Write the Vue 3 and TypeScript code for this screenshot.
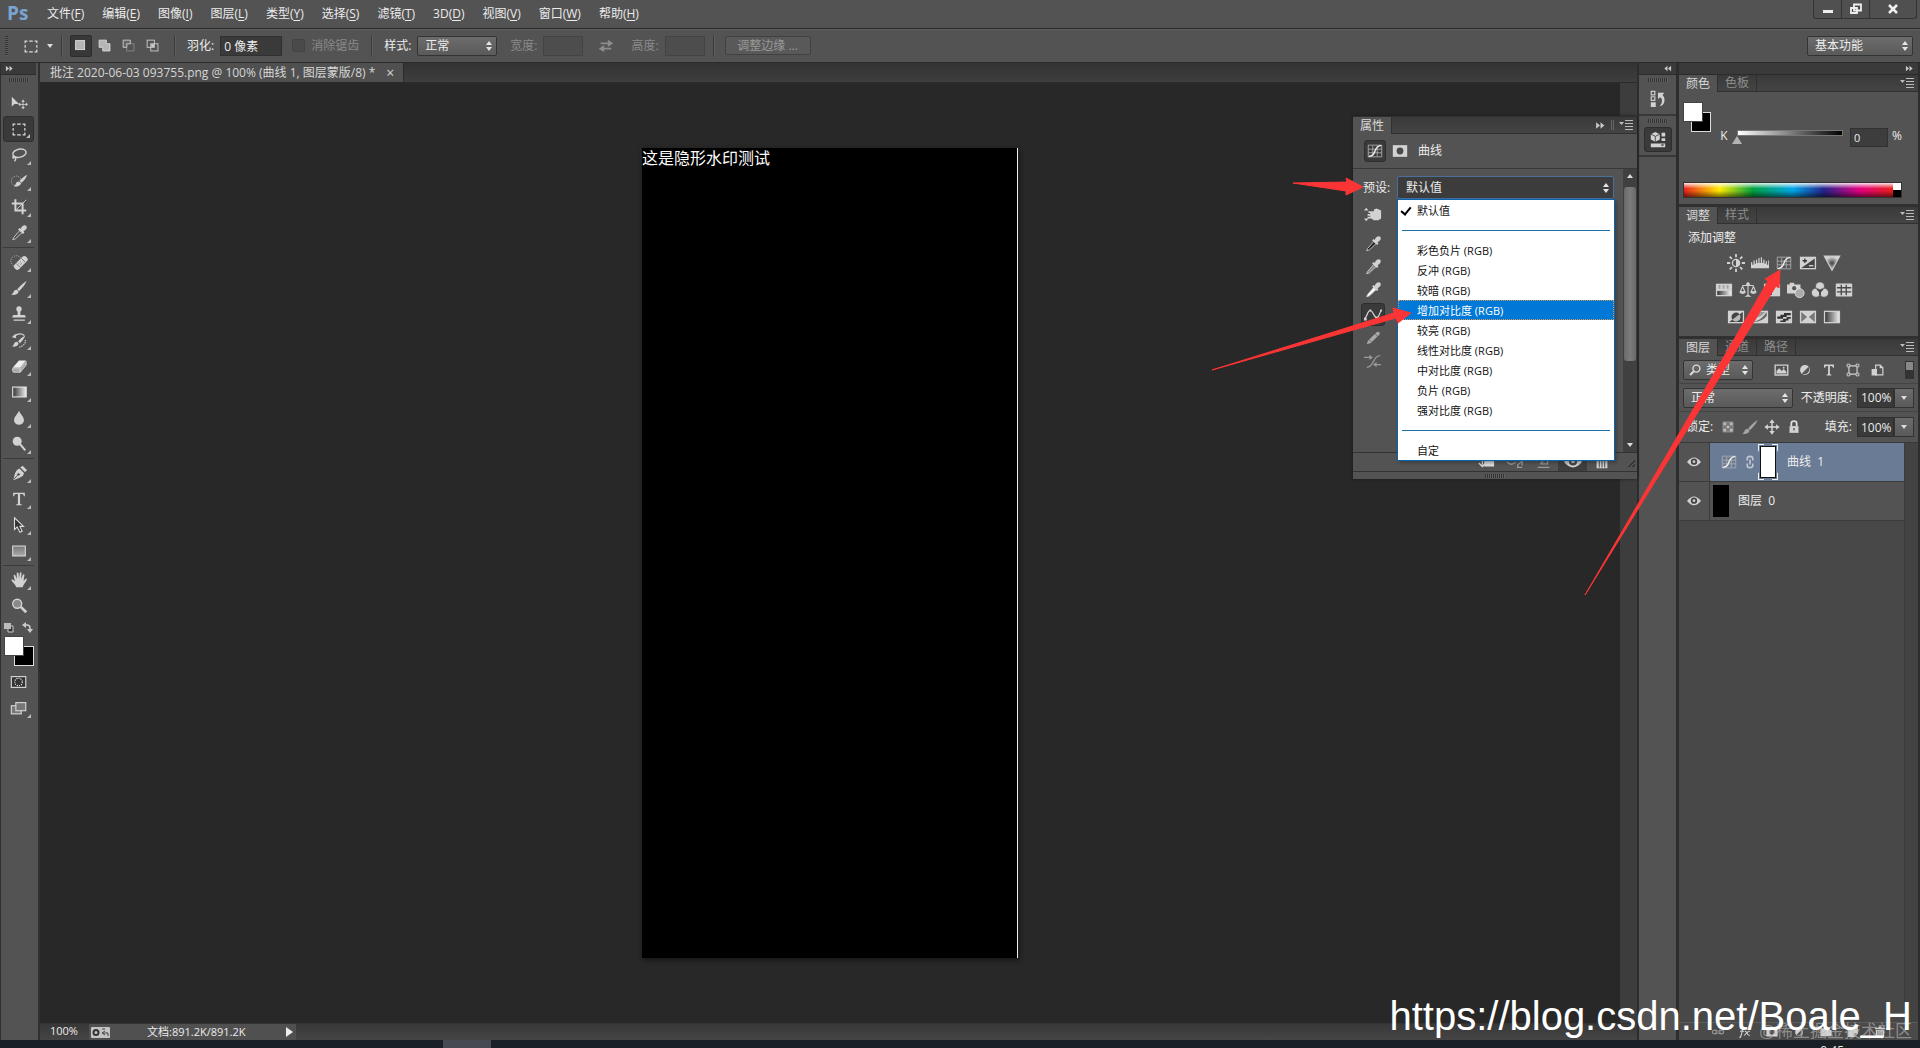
<script setup lang="ts">
import { ref } from 'vue'

interface MenuEntry { text: string; key: string }
interface Layer { id: number; name: string; num: string; kind: 'curves' | 'image'; active: boolean }

const menus: MenuEntry[] = [
  { text: '文件', key: 'F' }, { text: '编辑', key: 'E' }, { text: '图像', key: 'I' },
  { text: '图层', key: 'L' }, { text: '类型', key: 'Y' }, { text: '选择', key: 'S' },
  { text: '滤镜', key: 'T' }, { text: '3D', key: 'D' }, { text: '视图', key: 'V' },
  { text: '窗口', key: 'W' }, { text: '帮助', key: 'H' },
]

const combineModes: string[] = ['m-new', 'm-add', 'm-sub', 'm-int']

const toolGroups: string[][] = [
  ['move', 'marquee', 'lasso', 'quick', 'crop', 'dropper'],
  ['heal', 'brush', 'stamp', 'history', 'eraser', 'gradient', 'blur', 'dodge'],
  ['pen', 'type', 'path', 'rect'],
  ['hand', 'zoom'],
]
const noCorner: string[] = ['move', 'zoom']
const activeTool = ref('marquee')

const presets: string[] = [
  '彩色负片 (RGB)', '反冲 (RGB)', '较暗 (RGB)', '增加对比度 (RGB)', '较亮 (RGB)',
  '线性对比度 (RGB)', '中对比度 (RGB)', '负片 (RGB)', '强对比度 (RGB)',
]
const hovered = ref('增加对比度 (RGB)')
const open = ref(true)

const curveTools: string[] = ['drop-black', 'drop-gray', 'drop-white', 'curve-edit', 'pencil', 'smooth']
const propActions: string[] = ['a-clip', 'a-prev', 'a-reset', 'eye', 'trash']

const adjustRows: string[][] = [
  ['sun', 'levels', 'curves', 'exposure', 'vibrance'],
  ['hue', 'balance', 'bw', 'photo', 'mixer', 'lookup'],
  ['invert', 'poster', 'threshold', 'selective', 'gmap'],
]

const filters: string[] = ['f-image', 'f-adjust', 'f-type', 'f-shape', 'f-smart']
const locks: string[] = ['l-pixels', 'brush', 'l-move', 'l-lock']
const layerActions: string[] = ['link', 'fx', 'mask', 'f-adjust', 'folder', 'new', 'trash']

const layers: Layer[] = [
  { id: 1, name: '曲线', num: '1', kind: 'curves', active: true },
  { id: 2, name: '图层', num: '0', kind: 'image', active: false },
]
</script>

<template>
  <div class="app">
    <svg class="defs" width="0" height="0" aria-hidden="true">
      <defs>
        <linearGradient id="gd" x1="0" x2="1"><stop offset="0" stop-color="#333" /><stop offset="1" stop-color="#eee" /></linearGradient>
        <linearGradient id="gv" x1="0" x2="0" y1="0" y2="1"><stop offset="0" stop-color="#777" /><stop offset="1" stop-color="#aaa" /></linearGradient>
        <radialGradient id="gr"><stop offset="0" stop-color="#444" /><stop offset="1" stop-color="#ddd" /></radialGradient>
        <symbol id="move" viewBox="0 0 20 20"><path d="M2 3v11l3-3h5z" /><path d="M14.500 6l2 2.500h-1.500v2.500h2.500v-1.500l2.500 2-2.500 2v-1.500h-2.500v2.500h1.500l-2 2.500-2-2.500h1.500v-2.500h-2.500v1.500l-2.500-2 2.500-2v1.500h2.500v-2.500h-1.500z" /></symbol>
        <symbol id="marquee" viewBox="0 0 20 20"><path d="M3.500 7V4.500H6M8 4.500h4M14 4.500h2.500V7M16.500 9v3M16.500 14v2.500H14M12 16.500H8M6 16.500H3.500V14M3.500 12V9" fill="none" stroke="#ddd" stroke-width="1.300" /></symbol>
        <symbol id="lasso" viewBox="0 0 20 20"><g fill="none" stroke="#d2d2d2" stroke-width="1.600"><ellipse cx="10.500" cy="8" rx="7.500" ry="4.500" transform="rotate(-12 10.500 8)" /><path d="M5 11c-3 1-2 3 0 2s2 1 0 4" /></g></symbol>
        <symbol id="quick" viewBox="0 0 20 20"><circle cx="7" cy="10" r="5.500" fill="none" stroke="#ccc" stroke-dasharray="1 1.500" /><path d="M19 3c-4 2-7 5-8.500 7l2.500 2c2-2 5-5 6-9zM10 10.500c-2 0-3 1-3.500 2.500S5 15 4 15.500c4 1.500 7.500 0 8.500-3z" /></symbol>
        <symbol id="crop" viewBox="0 0 20 20"><path d="M6 1.500V14h12M2 6h12v12" fill="none" stroke="#d2d2d2" stroke-width="2.200" /><path d="M7 13L18 2" stroke="#ccc" stroke-width="1" /></symbol>
        <symbol id="dropper" viewBox="0 0 20 20"><path d="M4 15l7-8 2.500 2.500-7.500 7-3 1z" fill="#555" stroke="#ccc" /><path d="M9 6l1.500-1.500L12 5.500c1-4 4.500-5 6-3.500s.5 4.500-3 6l1 1.500L14.500 11z" /></symbol>
        <symbol id="heal" viewBox="0 0 20 20"><circle cx="7" cy="9" r="6" fill="none" stroke="#ccc" stroke-dasharray="1 1.500" /><g transform="rotate(-45 12 11)"><rect x="3" y="7.500" width="18" height="7" rx="3" /><path d="M8 8v6M16 8v6" stroke="#777" /><path d="M10 10h4M10 12h4" stroke="#666" stroke-dasharray="1 1" /></g></symbol>
        <symbol id="brush" viewBox="0 0 20 20"><path d="M18.500 2C14 5 10 9 8 11.500l2 2c3-2.500 7-7 8.500-11.500zM7.500 12c-2 0-3 1-3.500 2.500S2.500 16.500 1 17c4 1.500 8 .5 8.500-3z" /></symbol>
        <symbol id="stamp" viewBox="0 0 20 20"><circle cx="10" cy="4.500" r="3" /><path d="M8.500 6h3v5h4.500q1.500 0 1.500 3h-15q0-3 1.500-3h4.500zM4 16h12.500v1.500H4z" /></symbol>
        <symbol id="history" viewBox="0 0 20 20"><path d="M17 5c-3 1.500-6 4-8 6.500l2 2c2.500-2.500 5-5.500 6-8.500zM8 12c-2 0-3 1-3.500 2.500S3 16.500 2 17c4 1 7 0 7.500-3z" /><path d="M5 6c3-3.500 8-3.500 11-1" fill="none" stroke="#d2d2d2" stroke-width="1.500" /><path d="M2 7l4-4 1 5z" /><path d="M17 10c1 4-3 7-7 8" fill="none" stroke="#d2d2d2" stroke-width="1.300" stroke-dasharray="1.500 1" /></symbol>
        <symbol id="eraser" viewBox="0 0 20 20"><path d="M10 4h8l-7 8H3z" fill="#eee" /><path d="M3 12.500h8V17H4q-2-1-1-4.500zM11.500 12L18 5v4l-6.500 8z" fill="#aaa" stroke="#ddd" stroke-width=".800" /></symbol>
        <symbol id="gradient" viewBox="0 0 20 20"><rect x="3" y="4.500" width="15" height="11" fill="url(#gd)" stroke="#e6e6e6" stroke-width="1.200" /></symbol>
        <symbol id="blur" viewBox="0 0 20 20"><path d="M10 2c1.500 4 5.500 6.500 5.500 10.500a5.500 5 0 0 1-11 0C4.500 8.500 8.500 6 10 2z" /></symbol>
        <symbol id="dodge" viewBox="0 0 20 20"><circle cx="8" cy="7" r="5" /><path d="M11 10l6 7" stroke="#d2d2d2" stroke-width="2.200" /></symbol>
        <symbol id="pen" viewBox="0 0 20 20"><path d="M14 2l5 5-2.500 2-5-5zM10.500 5l5 5c0 4-6 6-12 8 2-5 1-10 7-13z" /><path d="M4 17l5-5" stroke="#444" /><circle cx="9.500" cy="11.500" r="1.300" fill="#444" /></symbol>
        <symbol id="type" viewBox="0 0 20 20"><path d="M3.500 3h13v4H15.500q-.5-2.500-2-2.500H11.200v10.500q0 1.200 2 1.200V17h-6.400v-.800q2 0 2-1.200V4.500H6.500Q5 4.500 4.500 7H3.500z" /></symbol>
        <symbol id="path" viewBox="0 0 20 20"><path d="M5 2v13l3-3 3 6 2.500-1-2.500-5.500h4z" fill="#333" stroke="#ddd" stroke-width="1.200" /></symbol>
        <symbol id="rect" viewBox="0 0 20 20"><rect x="3" y="4.500" width="14" height="11" fill="url(#gv)" stroke="#d8d8d8" stroke-width="1.200" /></symbol>
        <symbol id="hand" viewBox="0 0 20 20"><path d="M7 18c-1-3-4-5-5.500-8 1-1 2-.5 4 1.500L4 5c.5-1.500 1.500-1 2 0l1.500 4L7.500 2.500c.5-1 1.500-1 2 0L10 8.500l1-6.500c.5-1 1.500-.5 1.800.5L12.500 9l2-5c1-1 1.800 0 1.500 1l-1 6 2.500-2.500c1.500-.5 1.500.5 1 1.500-1.500 3-3.500 5-4.500 8z" /></symbol>
        <symbol id="zoom" viewBox="0 0 20 20"><circle cx="8" cy="7.500" r="5" fill="#8a8a8a" stroke="#d2d2d2" stroke-width="1.500" /><path d="M12 11l6 6" stroke="#d2d2d2" stroke-width="3" /></symbol>
        <symbol id="m-new" viewBox="0 0 20 20"><rect x="4" y="4" width="10" height="10" fill="#b5b5b5" stroke="#ddd" /></symbol>
        <symbol id="m-add" viewBox="0 0 20 20"><path d="M3.500 3.500h8v4h4v8h-8v-4h-4z" fill="#b5b5b5" stroke="#ddd" /></symbol>
        <symbol id="m-sub" viewBox="0 0 20 20"><rect x="7.500" y="7.500" width="8" height="8" fill="none" stroke="#888" /><path d="M3.500 3.500h8v4h-4v4h-4z" fill="#666" stroke="#ccc" /></symbol>
        <symbol id="m-int" viewBox="0 0 20 20"><g fill="none" stroke="#ccc"><rect x="3.500" y="3.500" width="8" height="8" /><rect x="7.500" y="7.500" width="8" height="8" /></g><path d="M8 8h3v3H8z" /></symbol>
        <symbol id="swap" viewBox="0 0 20 20"><path d="M4 6h8V3l6 4-6 4V8H4zM16 14H8v3l-6-4 6-4v3h8z" fill="#8c8c8c" /></symbol>
        <symbol id="curves" viewBox="0 0 20 20"><path d="M2.500 3.500h15v13h-15zM2.500 8h15M2.500 12h15M7.500 4v12M12.500 4v12" fill="none" stroke="#aaa" /><path d="M3 16q5 0 7-6t7-6" fill="none" stroke="#eee" stroke-width="1.600" /></symbol>
        <symbol id="mask" viewBox="0 0 20 20"><path d="M2 3.500h16v13H2z" /><circle cx="10" cy="10" r="3.800" fill="#4a4a4a" /></symbol>
        <symbol id="target" viewBox="0 0 20 20"><path d="M5 7h6V5l3-1 5 2v9l-3 2h-5l-3-2H4v-2h3v-1H4v-2h3V9H5zM0 6l2.500-3L5 6zM0 15l2.500 3L5 15z" /></symbol>
        <symbol id="drop-black" viewBox="0 0 20 20"><path d="M4 15l7-8 2.500 2.500-7.500 7-3 1z" fill="#222" stroke="#ccc" /><path d="M9 6l1.500-1.500L12 5.500c1-4 4.500-5 6-3.500s.5 4.500-3 6l1 1.500L14.500 11z" /></symbol>
        <symbol id="drop-gray" viewBox="0 0 20 20"><path d="M4 15l7-8 2.500 2.500-7.500 7-3 1z" fill="#888" stroke="#ccc" /><path d="M9 6l1.500-1.500L12 5.500c1-4 4.500-5 6-3.500s.5 4.500-3 6l1 1.500L14.500 11z" /></symbol>
        <symbol id="drop-white" viewBox="0 0 20 20"><path d="M4 15l7-8 2.500 2.500-7.500 7-3 1z" fill="#fff" stroke="#ccc" /><path d="M9 6l1.500-1.500L12 5.500c1-4 4.500-5 6-3.500s.5 4.500-3 6l1 1.500L14.500 11z" /></symbol>
        <symbol id="curve-edit" viewBox="0 0 20 20"><path d="M1 14C4 10 4 5 7 5s4 8 7 8 3-5 5-8" fill="none" stroke="#ddd" stroke-width="1.300" /><path d="M0 13h3v3H0zM6 4h2v2H6zM13 12h2v2h-2zM18 4h2v2h-2z" /></symbol>
        <symbol id="pencil" viewBox="0 0 20 20"><path d="M3 17l1.500-4L14 3.500q2-1 3 0t0 3L7.500 15.500z" fill="#aaa" /><path d="M6 12l2 2M12 5l3 3" stroke="#555" /></symbol>
        <symbol id="smooth" viewBox="0 0 20 20"><path d="M3 17c9 0 6-13 15-13M0 6h7M12 14h7" fill="none" stroke="#999" stroke-width="1.500" /><path d="M6 3l4 3-4 3zM14 11l-4 3 4 3z" fill="#999" /></symbol>
        <symbol id="a-clip" viewBox="0 0 20 20"><path d="M8 6h11v9H8z" fill="#ddd" /><path d="M2 8h4v5M2 11l4 4 3-3" fill="none" stroke="#ddd" stroke-width="1.500" /></symbol>
        <symbol id="a-prev" viewBox="0 0 20 20"><path d="M1 10q5 5 10 0M13 13l5-4v5M13 13v3h5" fill="none" stroke="#999" stroke-width="1.500" /></symbol>
        <symbol id="a-reset" viewBox="0 0 20 20"><path d="M3 16h13M6 12h8V7M6 12l3-3" fill="none" stroke="#999" stroke-width="1.500" /></symbol>
        <symbol id="eye" viewBox="0 0 20 20"><path d="M0 10q10-13 20 0-10 12-20 0z" /><circle cx="10" cy="9.500" r="4.500" fill="#444" /><circle cx="10" cy="9.500" r="2" fill="#ccc" /></symbol>
        <symbol id="trash" viewBox="0 0 20 20"><path d="M4 7h12v10H4zM3 4h14v2H3zM8 2h4v2H8z" /><path d="M7 8v8M10 8v8M13 8v8" stroke="#555" stroke-width="1.200" /></symbol>
        <symbol id="sun" viewBox="0 0 20 20"><circle cx="10" cy="10" r="4" fill="none" stroke="#d2d2d2" stroke-width="1.500" /><path d="M10 6a4 4 0 0 1 0 8z" /><path d="M10 0v3.500M10 16.500V20M0 10h3.500M16.500 10H20M3 3l2.500 2.500M14.500 14.500L17 17M3 17l2.500-2.500M14.500 5.500L17 3" stroke="#d2d2d2" stroke-width="2" /></symbol>
        <symbol id="levels" viewBox="0 0 22 20"><path d="M0 16.500V9h1.500v3H3V7h1.500v4H6V6h1.500v4H9V4h1.500v6H12V3h1.500v7H15V6h1.500v5H18V8h1.500v4H21V7h1v9.500z" /></symbol>
        <symbol id="exposure" viewBox="0 0 20 20"><rect x="1" y="3" width="18" height="14" /><path d="M2.500 15.500L17.500 5v10.500z" fill="#444" /><path d="M4 7.500h5M6.500 5v5" stroke="#333" stroke-width="1.400" /><path d="M11 13h5" stroke="#ddd" stroke-width="1.400" /></symbol>
        <symbol id="vibrance" viewBox="0 0 20 20"><path d="M1.500 2.500h17L10 18z" fill="url(#gr)" stroke="#ccc" stroke-width="1.400" /></symbol>
        <symbol id="hue" viewBox="0 0 20 20"><path d="M1 3h18v14H1z" /><path d="M5 4.500v4M9.500 4.500v4M14 4.500v4" stroke="#a2a2a2" stroke-width="2" /><rect x="2.500" y="11" width="15" height="4.500" fill="url(#gd)" /></symbol>
        <symbol id="balance" viewBox="0 0 20 20"><path d="M10 3v13M4 5h12M4 6l-2.500 6h5zM16 6l-2.500 6h5z" fill="none" stroke="#d2d2d2" stroke-width="1.200" /><path d="M0 12h8q-4 5-8 0zM12 12h8q-4 5-8 0zM6 17.500l4-2.500 4 2.500z" /><circle cx="10" cy="3.500" r="2" /></symbol>
        <symbol id="bw" viewBox="0 0 20 20"><path d="M1 3h18v14H1z" /><path d="M10 4.500v11H2.500v-11z" fill="#333" /></symbol>
        <symbol id="photo" viewBox="0 0 20 20"><path d="M0 4h3V2h5v2h7v10H0z" /><circle cx="8" cy="8" r="3" fill="#555" stroke="#eee" /><circle cx="14" cy="13.500" r="5" fill="#aaa" stroke="#ddd" /></symbol>
        <symbol id="mixer" viewBox="0 0 20 20"><g stroke="#555" stroke-width=".800"><circle cx="10" cy="6" r="5" /><circle cx="5.500" cy="13" r="5" /><circle cx="14.500" cy="13" r="5" /></g><path d="M5.500 8.500l4.500 1 4.500-1-3.500 4v3h-2v-3z" fill="#444" /></symbol>
        <symbol id="lookup" viewBox="0 0 20 20"><path d="M1 3h18v14H1z" /><path d="M2 7.500h17M2 12h17M7 4v12M12.500 4v12" stroke="#484848" stroke-width="1.500" /><path d="M1.500 3.500h17v13h-17z" fill="none" stroke="#d2d2d2" /></symbol>
        <symbol id="invert" viewBox="0 0 20 20"><path d="M1 3h18v14H1z" /><path d="M2.500 15.500L17.500 4.500v11z" fill="#444" /><path d="M6 13a5 5 0 0 1 8-6z" fill="#444" /><path d="M6 13a5 5 0 0 0 8-6z" fill="#bbb" /></symbol>
        <symbol id="poster" viewBox="0 0 20 20"><path d="M1 3h18v14H1z" /><path d="M2.500 15C8 15 13 11 17.500 4.500V9c-4 4-8 6.500-15 6.500z" fill="#666" /><path d="M2.500 11c5 0 10-2 13-6.500h-5C9 7 6 8 2.500 8z" fill="#999" /></symbol>
        <symbol id="threshold" viewBox="0 0 20 20"><path d="M1 3h18v14H1z" /><path d="M2.500 12V9.500H6v-2h4v-2h7.500V8H13v2H9v2zM6 15.500V14h3v-2h4v-2h4.500v2H15v2h-3v1.500z" fill="#333" /></symbol>
        <symbol id="selective" viewBox="0 0 20 20"><path d="M1 3h18v14H1z" /><path d="M2.500 4.500L9 10l-6.500 5.500zM17.500 4.500L11 10l6.500 5.500z" fill="#777" /></symbol>
        <symbol id="gmap" viewBox="0 0 20 20"><rect x="1.700" y="3.700" width="16.600" height="12.600" fill="url(#gd)" stroke="#d2d2d2" stroke-width="1.400" /></symbol>
        <symbol id="f-image" viewBox="0 0 20 20"><path d="M3.500 4.500h14v11h-14z" fill="none" stroke="#d2d2d2" stroke-width="1.500" /><path d="M5 14v-3l3-3 3 3 2-2 3 3v2z" /><circle cx="13" cy="7.500" r="1" /></symbol>
        <symbol id="f-adjust" viewBox="0 0 20 20"><circle cx="10" cy="10" r="5.500" /><path d="M6.500 14a5.500 5.500 0 0 0 7.500-7.500z" fill="#555" /></symbol>
        <symbol id="f-type" viewBox="0 0 20 20"><path d="M4.500 4h11v3.500h-1Q14 5.500 12.500 5.500h-1.500V14q0 1 1.500 1v1h-5v-1Q9 15 9 14V5.500H7.500Q6 5.500 5.500 7.500h-1z" /></symbol>
        <symbol id="f-shape" viewBox="0 0 20 20"><path d="M5.500 5.500h9v9h-9z" fill="none" stroke="#d2d2d2" stroke-width="1.300" /><path d="M3.500 3.500h3v3h-3zM13.500 3.500h3v3h-3zM3.500 13.500h3v3h-3zM13.500 13.500h3v3h-3z" fill="#555" stroke="#d2d2d2" /></symbol>
        <symbol id="f-smart" viewBox="0 0 20 20"><path d="M8.500 4.500h5l3 3v8h-8z" fill="none" stroke="#d2d2d2" stroke-width="1.300" /><path d="M4 9h6v7H4zM13 4v4h4z" /></symbol>
        <symbol id="l-pixels" viewBox="0 0 20 20"><path d="M4.500 4.500h11v11h-11z" fill="#777" stroke="#999" /><path d="M5 5h3v3H5zM12 5h3v3h-3zM8.500 8.500h3v3h-3zM5 12h3v3H5zM12 12h3v3h-3z" fill="#bbb" /></symbol>
        <symbol id="l-brush" viewBox="0 0 20 20"><path d="M18.500 2C14 5 10 9 8 11.500l2 2c3-2.500 7-7 8.500-11.500zM7.500 12c-2 0-3 1-3.500 2.500S2.500 16.500 1 17c4 1.500 8 .5 8.500-3z" fill="#a4a4a4" /></symbol>
        <symbol id="l-move" viewBox="0 0 20 20"><path d="M10 3v14M3 10h14" stroke="#ddd" stroke-width="1.500" /><path d="M10 1.500l3 4H7zM10 18.500l3-4H7zM1.500 10l4-3v6zM18.500 10l-4-3v6z" /></symbol>
        <symbol id="l-lock" viewBox="0 0 20 20"><path d="M5 9h10v7.500H5z" /><path d="M7 9V6q0-2.500 3-2.500T13 6v3" fill="none" stroke="#ddd" stroke-width="2" /><path d="M10 11v3" stroke="#555" stroke-width="1.500" /></symbol>
        <symbol id="link" viewBox="0 0 20 20"><path d="M9 8q-7-2-7 2t7 2M11 12q7 2 7-2t-7-2M6 10h8" fill="none" stroke="#999" stroke-width="1.600" /></symbol>
        <symbol id="chain" viewBox="0 0 20 20"><path d="M6.500 8V6q0-3 3.500-3t3.500 3v2M6.500 12v2q0 3 3.500 3t3.500-3v-2M10 7v6" fill="none" stroke="#bfc6d2" stroke-width="2" /></symbol>
        <symbol id="fx" viewBox="0 0 20 20"><path d="M2 18q2 0 3-5l1.500-6Q7.500 3 10 4M3 9h6M10 9q2 0 3 3t4 3M17 9q-3 0-8 6" fill="none" stroke="#d2d2d2" stroke-width="1.600" /></symbol>
        <symbol id="folder" viewBox="0 0 20 20"><path d="M2 5h7l1 2h8v9H2z" /></symbol>
        <symbol id="new" viewBox="0 0 20 20"><path d="M3 3h14v9l-5 5H3z" /><path d="M12 12h4l-4 4z" fill="#555" /></symbol>
        <symbol id="quickmask" viewBox="0 0 20 20"><rect x="1.500" y="4" width="16" height="12" fill="#333" stroke="#d2d2d2" stroke-width="1.300" /><circle cx="9.500" cy="10" r="4.200" fill="none" stroke="#eee" stroke-dasharray="1.200 1.200" stroke-width="1.300" /></symbol>
        <symbol id="screen" viewBox="0 0 20 20"><g fill="#777" stroke="#d2d2d2" stroke-width="1.300"><rect x="1.500" y="7.500" width="11" height="9" /><rect x="6.500" y="4" width="11" height="9" /></g></symbol>
        <symbol id="hist-panel" viewBox="0 0 20 20"><path d="M2.500 1.500h4v4h-4zM2.500 7.500h4v4h-4z" fill="none" stroke="#ccc" stroke-width="1.300" /><path d="M2 13.500h5.500V19H2zM10 3h7l-2 2.500q3 3 2 7.500-1 4-5 5 3-4 2.500-7Q14 9 12.500 8L10 10z" /></symbol>
        <symbol id="prop-panel" viewBox="0 0 20 20"><path d="M7 1l5 2.500v6L7 12 2 9.500v-6z" /><path d="M2 3.500L7 6l5-2.500M7 6v6" fill="none" stroke="#444" /><path d="M14 2h4v4h-4zM14 8h4v3h-4zM2 14h16v4H2z" /><path d="M13 15h4l-2 2z" fill="#333" /></symbol>
        <symbol id="double" viewBox="0 0 20 20"><path d="M2 4l7 6-7 6zM10 4l7 6-7 6z" fill="#c8c8c8" /></symbol>
        <symbol id="flyout" viewBox="0 0 14 12"><path d="M0 3h5L2.500 6zM6 1h8v1H6zM6 4h8v1H6zM6 7h8v1H6zM6 10h8v1H6z" fill="#bbb" /></symbol>
        <symbol id="search" viewBox="0 0 20 20"><circle cx="12" cy="8" r="5" fill="none" stroke="#ddd" stroke-width="2" /><path d="M8 12l-5 5" stroke="#ddd" stroke-width="3" /></symbol>
      </defs>
    </svg>

    <header class="menubar">
      <span class="logo">Ps</span>
      <nav class="menus">
        <button v-for="m in menus" :key="m.key" type="button">{{ m.text }}(<u>{{ m.key }}</u>)</button>
      </nav>
      <div class="winbtns">
        <button type="button" aria-label="最小化"><svg width="12" height="12"><path d="M1 7h10v3H1z" fill="#eee" /></svg></button>
        <button type="button" aria-label="还原"><svg width="14" height="12"><path d="M5 1.500h7v6H5zM2 5h6v5H2z" fill="#4a4a4a" stroke="#eee" stroke-width="1.800" /></svg></button>
        <button type="button" class="close" aria-label="关闭"><svg width="12" height="10"><path d="M2 1l8 8M10 1L2 9" stroke="#eee" stroke-width="2.500" /></svg></button>
      </div>
    </header>

    <div class="options">
      <i class="vgrip"></i>
      <button type="button" class="toolpick" aria-label="选框"><svg class="ic"><use href="#marquee" /></svg><i class="caret"></i></button>
      <i class="vsep"></i>
      <div class="modes">
        <button v-for="(m, i) in combineModes" :key="m" type="button" :class="{ on: i === 0 }" :aria-label="m"><svg class="ic"><use :href="'#' + m" /></svg></button>
      </div>
      <i class="vsep"></i>
      <label class="field">羽化:<input class="feather" type="text" value="0 像素"></label>
      <label class="check dim"><input type="checkbox" disabled>消除锯齿</label>
      <i class="vsep"></i>
      <label class="field">样式:<span class="sel style"><select><option>正常</option></select></span></label>
      <label class="field dim wide">宽度:<input class="size" type="text" disabled></label>
      <button type="button" class="swap" aria-label="交换"><svg class="ic"><use href="#swap" /></svg></button>
      <label class="field dim tall">高度:<input class="size" type="text" disabled></label>
      <i class="vsep"></i>
      <button type="button" class="refine" disabled>调整边缘 ...</button>
      <span class="sel workspace"><select aria-label="工作区"><option>基本功能</option></select></span>
    </div>

    <div class="work">
      <aside class="toolbox">
        <div class="strip"><svg class="dbl"><use href="#double" /></svg></div>
        <i class="grip"></i>
        <div v-for="(g, gi) in toolGroups" :key="gi" class="tgroup">
          <button v-for="t in g" :key="t" type="button" class="tool" :class="{ on: t === activeTool, corner: !noCorner.includes(t) }" :aria-label="t" @click="activeTool = t">
            <svg class="ic"><use :href="'#' + t" /></svg>
          </button>
        </div>
        <div class="swatchtools">
          <svg width="10" height="11"><path d="M4 4h5v6H4z" fill="#333" stroke="#ccc" /><path d="M0 1h7v6H0z" fill="#bbb" /></svg>
          <svg width="11" height="11"><path d="M2 3h3q3 0 3 3v3" fill="none" stroke="#ccc" stroke-width="1.500" /><path d="M0 3l4-3v6zM5 7h6l-3 4z" fill="#ccc" /></svg>
        </div>
        <div class="swatches"><i class="bg"></i><i class="fg"></i></div>
        <button type="button" class="tool" aria-label="快速蒙版"><svg class="ic"><use href="#quickmask" /></svg></button>
        <button type="button" class="tool corner" aria-label="屏幕模式"><svg class="ic"><use href="#screen" /></svg></button>
      </aside>

      <main class="docarea">
        <div class="tabs">
          <div class="doctab"><span>批注 2020-06-03 093755.png @ 100% (曲线 1, 图层蒙版/8) *</span><button type="button" aria-label="关闭文档">×</button></div>
        </div>
        <div class="viewport">
          <div class="stage"><div class="page">这是隐形水印测试</div></div>
          <i class="vscroll"></i>
        </div>
        <footer class="status">
          <span class="zoomval">100%</span>
          <div class="info">
            <svg width="19" height="11"><rect width="19" height="11" rx="1" fill="#c4c4c4" /><circle cx="5" cy="5.500" r="2.500" fill="none" stroke="#333" stroke-width="2" /><path d="M17 9v-3h-5M14 4l-3 2 3 2M11 2h3" fill="none" stroke="#444" /></svg>
            <span>文档:891.2K/891.2K</span>
            <i class="play"></i>
          </div>
        </footer>

        <section class="props">
          <div class="ptabs"><span class="ptab on">属性</span><svg class="dbl"><use href="#double" /></svg><i class="bar"></i><svg class="fly"><use href="#flyout" /></svg></div>
          <div class="phead">
            <span class="box"><svg class="ic"><use href="#curves" /></svg></span>
            <svg class="ic"><use href="#mask" /></svg>
            <span>曲线</span>
          </div>
          <div class="pbody">
            <div class="pmain">
              <div class="preset">
                <label for="preset">预设:</label>
                <button id="preset" type="button" class="combo" aria-haspopup="listbox" :aria-expanded="open" @click="open = !open">默认值</button>
                <ul v-if="open" class="popup" role="listbox">
                  <li class="checked" role="option" aria-selected="true">默认值</li>
                  <li class="line" role="separator"></li>
                  <li v-for="p in presets" :key="p" role="option" :class="{ hot: p === hovered }" @mouseenter="hovered = p">{{ p }}</li>
                  <li class="line" role="separator"></li>
                  <li role="option">自定</li>
                </ul>
              </div>
              <div class="ctools">
                <button type="button" class="first" aria-label="目标调整"><svg class="ic"><use href="#target" /></svg></button>
                <button v-for="c in curveTools" :key="c" type="button" :class="{ box: c === 'curve-edit' }" :aria-label="c"><svg class="ic"><use :href="'#' + c" /></svg></button>
              </div>
            </div>
            <div class="pscroll"><i class="up"></i><i class="thumb"></i><i class="down"></i></div>
          </div>
          <div class="pfoot">
            <button v-for="a in propActions" :key="a" type="button" :class="{ on: a === 'eye' }" :aria-label="a"><svg class="ic"><use :href="'#' + a" /></svg></button>
            <i class="resize"></i>
          </div>
          <div class="pgrip"><i class="grip"></i></div>
        </section>
      </main>

      <aside class="dock">
        <div class="strip right"><svg class="dbl flip"><use href="#double" /></svg></div>
        <div class="dgroup"><i class="grip"></i><button type="button" aria-label="历史记录"><svg class="ic"><use href="#hist-panel" /></svg></button></div>
        <div class="dgroup"><i class="grip"></i><button type="button" class="box" aria-label="属性"><svg class="ic"><use href="#prop-panel" /></svg></button></div>
      </aside>

      <aside class="panels">
        <div class="strip right"><svg class="dbl"><use href="#double" /></svg></div>

        <section class="panel">
          <div class="ptabs"><span class="ptab on">颜色</span><span class="ptab">色板</span><svg class="fly"><use href="#flyout" /></svg></div>
          <div class="color">
            <div class="crow">
              <div class="swatches"><i class="bg"></i><i class="fg"></i></div>
              <label for="k">K</label>
              <div class="slider"><i class="track"></i><i class="knob"></i></div>
              <input id="k" type="text" value="0"><span>%</span>
            </div>
            <div class="spectrum"><i class="hues"></i><i class="ends"></i></div>
          </div>
        </section>

        <section class="panel">
          <div class="ptabs"><span class="ptab on">调整</span><span class="ptab">样式</span><svg class="fly"><use href="#flyout" /></svg></div>
          <div class="adjust">
            <p>添加调整</p>
            <div v-for="(r, i) in adjustRows" :key="i" class="arow">
              <button v-for="a in r" :key="a" type="button" :aria-label="a"><svg class="ic"><use :href="'#' + a" /></svg></button>
            </div>
          </div>
        </section>

        <section class="panel layers">
          <div class="ptabs"><span class="ptab on">图层</span><span class="ptab">通道</span><span class="ptab">路径</span><svg class="fly"><use href="#flyout" /></svg></div>
          <div class="lrow">
            <span class="sel kind"><svg class="find"><use href="#search" /></svg><select aria-label="过滤"><option>类型</option></select></span>
            <div class="fset"><button v-for="f in filters" :key="f" type="button" :aria-label="f"><svg class="ic"><use :href="'#' + f" /></svg></button></div>
            <i class="switch"></i>
          </div>
          <div class="lrow">
            <span class="sel blend"><select aria-label="混合模式"><option>正常</option></select></span>
            <label class="pct">不透明度:<input type="text" value="100%"><i class="drop"></i></label>
          </div>
          <div class="lrow last">
            <span class="lk">锁定:</span>
            <div class="lset"><button v-for="l in locks" :key="l" type="button" :aria-label="l"><svg class="ic"><use :href="l === 'brush' ? '#l-brush' : '#' + l" /></svg></button></div>
            <label class="pct">填充:<input type="text" value="100%"><i class="drop"></i></label>
          </div>
          <div class="list">
            <div class="rows">
              <div v-for="l in layers" :key="l.id" class="layer" :class="{ on: l.active }">
                <button type="button" class="vis" aria-label="可见性"><svg class="ic"><use href="#eye" /></svg></button>
                <template v-if="l.kind === 'curves'">
                  <svg class="ic adj"><use href="#curves" /></svg>
                  <svg class="chain"><use href="#chain" /></svg>
                  <span class="maskframe"><i></i></span>
                </template>
                <i v-else class="thumbnail"></i>
                <span class="lname">{{ l.name }}&nbsp; {{ l.num }}</span>
              </div>
            </div>
            <i class="lscroll"></i>
          </div>
          <div class="lfoot"><button v-for="a in layerActions" :key="a" type="button" :aria-label="a"><svg class="ic"><use :href="'#' + a" /></svg></button></div>
        </section>
      </aside>
    </div>

    <div class="taskbar"><i></i><time>9:45</time></div>

    <svg class="arrows" viewBox="1200 0 720 600" width="720" height="600" aria-hidden="true">
      <g fill="#fb3535" stroke="#fb3535" stroke-linejoin="round">
        <path d="M1293 183l54-1-1-4 17 9-17 8v-4z" />
        <path d="M1212 370l182-57-1-5 18 5-13 10-2-5z" />
        <path d="M1585 595L1768 281l-3-2 15-9-1 18-3-2z" />
      </g>
    </svg>
    <div class="mark2">@稀土掘金技术社区</div>
    <div class="mark">https://blog.csdn.net/Boale_H</div>
  </div>
</template>

<style>
body { background: #282828; }
</style>

<style scoped>
* { box-sizing: border-box; }
.app {
  position: relative;
  display: flex;
  flex-direction: column;
  min-height: 100vh;
  overflow: hidden;
  background: #282828;
  color: #ececec;
  font: 12px/16px "Open Sans", "Noto Sans CJK SC", sans-serif;
}
button, input, select { font: inherit; color: inherit; padding: 0; margin: 0; border: 0; background: none; outline: 0; }
button { display: flex; align-items: center; justify-content: center; }
i { display: block; flex: none; font-style: normal; }
svg { display: block; flex: none; }
.defs { position: absolute; }
.ic { width: 18px; height: 18px; fill: #d2d2d2; }
.dbl { width: 9px; height: 9px; }
.flip { transform: scaleX(-1); }
.fly { width: 14px; height: 12px; }

.menubar { display: flex; height: 29px; background: #535353; border-bottom: 1px solid #2b2b2b; }
.logo { width: 47px; padding-left: 7px; font: 700 19px/27px "Open Sans", sans-serif; color: #7aa5d2; }
.menus { display: flex; gap: 18px; flex: 1; height: 27px; }
.menus u { text-underline-offset: 2px; }
.winbtns { display: flex; height: 19px; margin-right: 3px; border: 1px solid #333; border-top: 0; border-radius: 0 0 3px 3px; background: #505050; }
.winbtns button { width: 28px; border-right: 1px solid #333; }
.winbtns .close { width: 46px; border-right: 0; }

.options { display: flex; align-items: center; height: 34px; padding: 0 7px 1px 5px; background: #535353; border-top: 1px solid #5f5f5f; border-bottom: 1px solid #2b2b2b; }
.vgrip { width: 3px; height: 20px; background: repeating-linear-gradient(#333 0 1px, #5c5c5c 1px 2px); }
.toolpick { width: 48px; gap: 7px; margin-left: 5px; }
.caret { border: 3px solid transparent; border-top: 4px solid #ddd; border-bottom: 0; }
.vsep { width: 2px; height: 22px; background: #3c3c3c; border-right: 1px solid #5e5e5e; }
.modes { display: flex; gap: 2px; margin: 0 10px 0 7px; }
.modes button { width: 22px; height: 22px; }
.modes .on { background: #383838; border: 1px solid #2c2c2c; border-radius: 2px; }
.field { display: flex; align-items: center; gap: 6px; margin-left: 11px; }
.field input { height: 20px; padding-left: 3px; background: #3a3a3a; border: 1px solid #303030; }
.feather { width: 62px; }
.dim { color: #8a8a8a; }
.field .size { width: 40px; background: #4d4d4d; border-color: #434343; }
.check { display: flex; align-items: center; gap: 6px; margin: 0 12px 0 10px; }
.check input { appearance: none; width: 13px; height: 13px; background: #4a4a4a; border: 1px solid #434343; border-radius: 2px; }
.sel { position: relative; display: flex; align-items: center; height: 20px; background: linear-gradient(#6c6c6c, #5a5a5a); border: 1px solid #333; border-radius: 2px; }
.sel select { appearance: none; width: 100%; height: 18px; padding-left: 7px; }
.sel::before, .sel::after, .combo::before, .combo::after { content: ""; position: absolute; right: 4px; border: 3px solid transparent; }
.sel::before, .combo::before { top: calc(50% - 5px); border-top: 0; border-bottom: 4px solid #e4e4e4; }
.sel::after, .combo::after { bottom: calc(50% - 5px); border-bottom: 0; border-top: 4px solid #e4e4e4; }
.style { width: 80px; }
.wide { margin-left: 13px; }
.swap { width: 20px; margin: 0 4px 0 13px; }
.tall { margin-right: 8px; }
.refine { width: 86px; height: 19px; margin-left: 10px; color: #999; background: #595959; border: 1px solid #414141; border-radius: 2px; }
.workspace { width: 106px; margin-left: auto; }

.work { display: flex; flex: 1; }
.strip { display: flex; align-items: center; width: 100%; height: 12px; padding: 0 4px; background: #3a3a3a; border-bottom: 1px solid #2b2b2b; }
.right { justify-content: flex-end; }
.grip { width: 20px; height: 4px; background: repeating-linear-gradient(90deg, #333 0 1px, #5f5f5f 1px 2px); }

.toolbox { display: flex; flex-direction: column; align-items: center; width: 40px; padding-right: 2px; background: #535353; border: 1px solid #2f2f2f; border-width: 0 2px 0 1px; }
.toolbox > .grip { margin: 3px 0 8px; }
.tgroup + .tgroup { border-top: 1px solid #3a3a3a; margin-top: 1px; padding-top: 1px; }
.tool { position: relative; width: 31px; height: 26px; }
.tool.on { background: #3a3a3a; border: 1px solid #2e2e2e; border-radius: 3px; }
.corner::after { content: ""; position: absolute; right: 3px; bottom: 3px; border: 2px solid; border-color: transparent #bbb #bbb transparent; }
.swatchtools { display: flex; justify-content: space-between; align-items: center; width: 29px; height: 16px; }
.swatches { position: relative; width: 30px; height: 31px; }
.swatches i { position: absolute; width: 20px; height: 20px; border: 1px solid #ddd; }
.swatches .fg { top: 0; left: 0; background: #fff; border-color: #444; }
.swatches .bg { right: 0; bottom: 1px; background: #000; }
.toolbox .swatches { margin: 1px 0 2px; }

.docarea { position: relative; display: flex; flex-direction: column; flex: 1; min-width: 0; }
.tabs { display: flex; height: 20px; background: linear-gradient(#333, #3e3e3e); border-bottom: 1px solid #2b2b2b; }
.doctab { display: flex; align-items: center; gap: 10px; padding: 0 8px 0 10px; background: #505050; border-right: 1px solid #2b2b2b; color: #d6d6d6; white-space: nowrap; }
.doctab button { width: 10px; font-size: 14px; }
.viewport { display: flex; flex: 1; }
.stage { flex: 1; display: flex; align-items: center; justify-content: center; padding: 60px 0; }
.page { width: 376px; height: 810px; background: #000; border-right: 1px solid #eee; color: #fff; font-size: 16px; line-height: 20px; box-shadow: 1px 2px 5px #151515; }
.vscroll { width: 17px; background: #3d3d3d; }
.status { display: flex; height: 17px; background: linear-gradient(#383838, #454545); border-top: 1px solid #333; line-height: 14px; font-size: 11px; }
.zoomval { width: 49px; padding-left: 10px; }
.info { display: flex; align-items: center; width: 207px; padding: 0 3px 0 2px; background: #505050; }
.info span { flex: 1; padding-left: 37px; }
.play { border: 5px solid transparent; border-left: 7px solid #eee; border-right: 0; }

.ptabs { display: flex; align-items: center; height: 17px; padding-right: 4px; background: linear-gradient(#3a3a3a, #444); border-bottom: 1px solid #303030; }
.ptab { height: 16px; padding: 0 7px; line-height: 16px; color: #8d8d8d; border-right: 1px solid #303030; }
.ptab.on { height: 17px; line-height: 17px; background: #535353; color: #d8d8d8; }
.ptabs .fly { margin-left: auto; }
.box { background: #3a3a3a; border: 1px solid #2d2d2d; border-radius: 3px; }

.props { position: absolute; right: 0; top: 53px; width: 284px; background: #535353; border-top: 1px solid #303030; box-shadow: 0 0 3px #1c1c1c; }
.props .dbl { margin-left: auto; width: 11px; height: 11px; }
.props .bar { width: 3px; height: 10px; margin: 0 5px 0 5px; border: 1px solid #666; border-width: 0 1px; }
.props .ptabs .fly { margin-left: 0; }
.phead { display: flex; align-items: center; gap: 5px; height: 35px; padding-left: 11px; border-bottom: 1px solid #383838; }
.phead .box { width: 22px; height: 22px; padding: 1px; }
.phead span:last-child { margin-left: 4px; }
.pbody { display: flex; height: 283px; }
.pmain { flex: 1; }
.preset { position: relative; display: flex; align-items: center; height: 23px; margin-top: 7px; padding-right: 9px; }
.preset label { width: 44px; padding-left: 10px; }
.combo { position: relative; flex: 1; height: 23px; justify-content: flex-start; padding-left: 8px; background: #3c3c3c; border: 1px solid #4a6f9c; border-radius: 2px; }
.popup { position: absolute; z-index: 2; top: 23px; left: 44px; right: 8px; margin: 0; padding: 0; list-style: none; background: #fff; border: 1px solid #0a64ad; box-shadow: 2px 2px 3px #2226; color: #111; font-size: 11px; }
.popup li { height: 20px; padding-left: 19px; line-height: 21px; }
.popup .line { padding: 10px 4px 0; }
.popup .line::before { content: ""; display: block; height: 1px; background: #1f6fa8; }
.popup .hot { background: #0078d7; color: #fff; outline: 1px dotted #d59a5a; outline-offset: -1px; }
.checked { position: relative; }
.checked::before { content: ""; position: absolute; left: 5px; top: 5px; width: 4px; height: 8px; border: solid #000; border-width: 0 2px 2px 0; transform: rotate(40deg); }
.ctools { width: 24px; margin: 3px 0 0 8px; }
.ctools button { width: 24px; height: 23px; }
.ctools .first { margin-bottom: 7px; }
.ctools .box { margin-top: 2px; }
.pscroll { display: flex; flex-direction: column; align-items: center; width: 14px; padding: 5px 0; background: #404040; }
.up { border: 3px solid transparent; border-bottom: 4px solid #ddd; border-top: 0; }
.down { margin-top: auto; border: 3px solid transparent; border-top: 4px solid #ddd; border-bottom: 0; }
.thumb { width: 12px; height: 174px; margin-top: 9px; border-radius: 3px; background: linear-gradient(90deg, #696969, #7c7c7c, #696969); }
.pfoot { display: flex; align-items: center; justify-content: flex-end; height: 19px; border-top: 1px solid #333; }
.pfoot button { width: 29px; height: 18px; }
.pfoot .on { background: #3e3e3e; }
.resize { width: 10px; height: 10px; margin: 0 2px 0 9px; background: repeating-linear-gradient(135deg, #333 0 1px, transparent 1px 3px); clip-path: polygon(100% 0, 100% 100%, 0 100%); }
.pgrip { display: flex; align-items: center; justify-content: center; height: 8px; border-top: 1px solid #333; }

.dock { width: 41px; background: #535353; border: solid #2d2d2d; border-width: 0 2px; }
.dgroup { display: flex; flex-direction: column; align-items: center; height: 41px; padding-top: 3px; border-bottom: 2px solid #383838; }
.dgroup button { width: 28px; height: 25px; margin-top: 4px; }

.panels { display: flex; flex-direction: column; width: 242px; background: #535353; border: 1px solid #2d2d2d; border-width: 0 2px 0 1px; }
.panel { border-bottom: 3px solid #303030; }
.color { height: 112px; padding: 10px 16px 6px 4px; display: flex; flex-direction: column; justify-content: space-between; }
.crow { display: flex; align-items: flex-start; }
.crow label { width: 18px; margin: 26px 0 0 9px; }
.slider { width: 112px; height: 16px; margin-top: 28px; }
.track { height: 6px; border: 1px solid #777; background: linear-gradient(90deg, #fff, #000); }
.knob { width: 0; margin-left: -5px; border: 5px solid transparent; border-bottom: 8px solid #b4b4b4; border-top: 0; }
.crow input { width: 38px; height: 19px; margin: 26px 4px 0 7px; padding-left: 3px; font-size: 11px; background: #3d3d3d; border: 1px solid #323232; }
.crow span { margin-top: 26px; }
.spectrum { display: flex; height: 16px; border: 1px solid #333; }
.hues { flex: 1; background: linear-gradient(#fffd 0%, #fff0 40%, #0000 55%, #0008 100%), linear-gradient(90deg, #e8201c, #ffec00 17%, #00a03e 33%, #00a6e8 52%, #23238a 67%, #e4007f 84%, #e8201c); }
.ends { width: 8px; background: linear-gradient(#fff 50%, #000 50%); }

.adjust { height: 112px; padding: 6px 0 0 9px; }
.adjust p { margin: 0 0 3px; }
.arow { display: flex; justify-content: center; width: 192px; height: 27px; }
.arow button { width: 24px; }

.layers { display: flex; flex-direction: column; flex: 1; border-bottom: 0; }
.lrow { display: flex; align-items: center; height: 28px; padding: 0 4px; border-bottom: 1px solid #444; }
.lrow.last { height: 30px; border-bottom: 0; }
.kind { width: 70px; }
.find { width: 14px; height: 14px; margin-left: 4px; }
.kind select { padding-left: 4px; }
.fset { display: flex; margin-left: 16px; }
.fset button { width: 24px; }
.switch { width: 9px; height: 18px; margin-left: auto; background: linear-gradient(#888 50%, #333 50%); border: 1px solid #333; }
.blend { width: 110px; }
.pct { display: flex; align-items: center; justify-content: flex-end; margin-left: auto; }
.pct input { width: 37px; height: 20px; margin-left: 5px; padding-left: 3px; background: #3a3a3a; border: 1px solid #303030; }
.drop { width: 20px; height: 20px; border: 1px solid #333; background: linear-gradient(#6c6c6c, #5a5a5a); display: grid; place-items: center; }
.drop::before { content: ""; border: 3px solid transparent; border-top: 4px solid #ddd; border-bottom: 0; }
.lk { width: 34px; padding-left: 3px; }
.lset { display: flex; }
.lset button { width: 22px; }
.list { display: flex; flex: 1; background: #484848; border-top: 1px solid #3a3a3a; }
.rows { flex: 1; }
.layer { display: flex; align-items: center; height: 39px; background: #535353; border-bottom: 1px solid #3c3c3c; }
.vis { align-self: stretch; width: 31px; border-right: 1px solid #3c3c3c; background: #535353; }
.vis .ic { width: 14px; height: 14px; }
.layer.on { background: #6a7b95; }
.adj { margin-left: 10px; }
.chain { width: 16px; height: 18px; margin-left: 4px; }
.maskframe { position: relative; display: flex; padding: 2px; }
.maskframe::before { content: ""; position: absolute; inset: 0; border: 1px solid #eee; clip-path: polygon(0 0, 30% 0, 30% 30%, 70% 30%, 70% 0, 100% 0, 100% 20%, 70% 20%, 70% 80%, 100% 80%, 100% 100%, 70% 100%, 70% 70%, 30% 70%, 30% 100%, 0 100%, 0 80%, 30% 80%, 30% 20%, 0 20%); }
.maskframe i { width: 16px; height: 32px; background: #fff; border: 1px solid #111; }
.thumbnail { width: 16px; height: 32px; margin-left: 3px; background: #000; }
.lname { margin-left: 9px; }
.lscroll { width: 14px; background: #434343; border-left: 1px solid #3c3c3c; }
.lfoot { display: flex; align-items: center; justify-content: center; height: 18px; background: #4a4a4a; border-top: 1px solid #5c5c5c; }
.lfoot button { width: 27px; }
.lfoot .ic { width: 14px; height: 14px; }

.taskbar { display: flex; justify-content: space-between; height: 8px; padding: 0 76px 0 443px; overflow: hidden; background: #192026; }
.taskbar i { width: 48px; background: #454b51; }
.taskbar time { line-height: 22px; }

.arrows { position: absolute; z-index: 5; top: 0; right: 0; pointer-events: none; }
.mark, .mark2 { position: absolute; z-index: 6; right: 8px; pointer-events: none; white-space: nowrap; }
.mark { bottom: 9px; color: #fff; font: 40px/46px "Liberation Sans", sans-serif; }
.mark2 { bottom: 6px; color: #bbb9; font: 17px/20px "Liberation Sans", "Noto Sans CJK SC", sans-serif; }
</style>
